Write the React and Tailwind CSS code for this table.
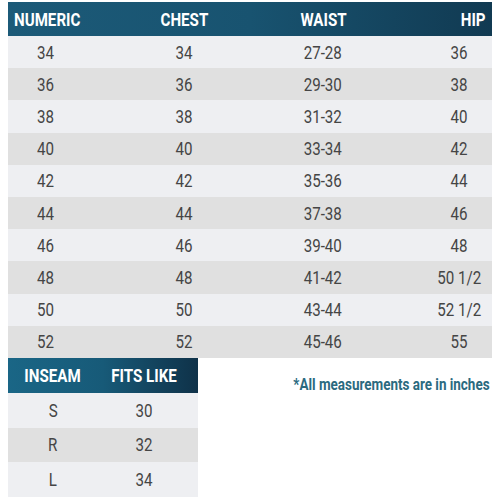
const rows = [
  ['34', '34', '27-28', '36'],
  ['36', '36', '29-30', '38'],
  ['38', '38', '31-32', '40'],
  ['40', '40', '33-34', '42'],
  ['42', '42', '35-36', '44'],
  ['44', '44', '37-38', '46'],
  ['46', '46', '39-40', '48'],
  ['48', '48', '41-42', '50 1/2'],
  ['50', '50', '43-44', '52 1/2'],
  ['52', '52', '45-46', '55'],
];

const inseam = [
  ['S', '30'],
  ['R', '32'],
  ['L', '34'],
];

const font = { fontFamily: 'Roboto, "Liberation Sans", sans-serif' };

function Cond({ children, className = '' }) {
  return <span className={`inline-block scale-x-[0.84] ${className}`}>{children}</span>;
}

export default function App() {
  return (
    <div className="w-[500px] h-[500px] bg-white pt-[2px]" style={font}>
      <div className="mx-[8px] w-[484px]">
        <div className="grid grid-cols-[117px_118px_160px_89px] h-[34px] items-center bg-gradient-to-r from-[#1c5a78] via-[#185370] to-[#113a52] text-white font-bold text-[18px]">
          <div className="pl-[6px]"><Cond className="origin-left">NUMERIC</Cond></div>
          <div className="text-center"><Cond>CHEST</Cond></div>
          <div className="text-center"><Cond>WAIST</Cond></div>
          <div className="text-right pr-[6px]"><Cond className="origin-right">HIP</Cond></div>
        </div>
        {rows.map((r, i) => (
          <div
            key={r[0]}
            className={`grid grid-cols-[117px_118px_160px_89px] h-[32.2px] items-center text-[18px] text-[#454545] ${
              i % 2 === 0 ? 'bg-[#eeeff2]' : 'bg-[#e0e0e0]'
            }`}
          >
            <div className="pl-[29px]"><Cond className="origin-left">{r[0]}</Cond></div>
            <div className="text-center"><Cond>{r[1]}</Cond></div>
            <div className="text-center"><Cond>{r[2]}</Cond></div>
            <div className="text-center pl-[23px]"><Cond>{r[3]}</Cond></div>
          </div>
        ))}
      </div>

      <div className="flex items-start">
        <div className="ml-[8px] w-[190px]">
          <div className="grid grid-cols-[90px_100px] h-[35px] items-center bg-gradient-to-r from-[#1a6686] via-[#175a78] to-[#0f3249] text-white font-bold text-[18px]">
            <div className="text-center"><Cond>INSEAM</Cond></div>
            <div className="text-center pr-[8px]"><Cond>FITS LIKE</Cond></div>
          </div>
          {inseam.map((r, i) => (
            <div
              key={r[0]}
              className={`grid grid-cols-[90px_100px] h-[34.7px] items-center text-[18px] text-[#454545] ${
                i % 2 === 0 ? 'bg-[#eeeff2]' : 'bg-[#e0e0e0]'
              }`}
            >
              <div className="text-center"><Cond>{r[0]}</Cond></div>
              <div className="text-center pr-[8px]"><Cond>{r[1]}</Cond></div>
            </div>
          ))}
        </div>
        <div className="flex-1 text-right pr-[10px] pt-[15px] text-[16px] font-bold text-[#2b6a80]">
          <Cond className="origin-right whitespace-nowrap">*All measurements are in inches</Cond>
        </div>
      </div>
    </div>
  );
}
